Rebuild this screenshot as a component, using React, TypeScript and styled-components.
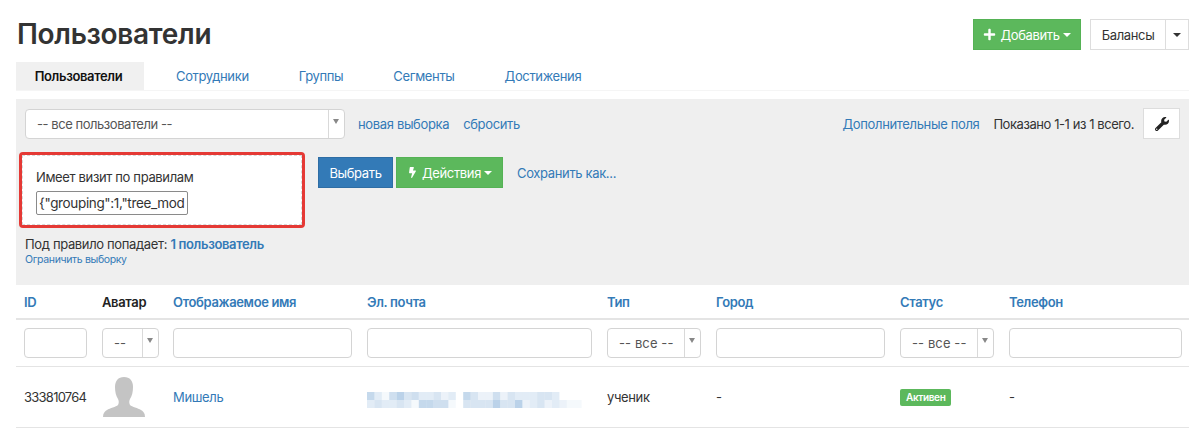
import React from 'react';
import styled, { createGlobalStyle, css } from 'styled-components';
import { FaBolt, FaPlus, FaWrench } from 'react-icons/fa';

const GlobalStyle = createGlobalStyle`
  html, body {
    margin: 0;
    background: #fff;
    overflow: hidden;
  }
  body {
    font-family: Inter, "Liberation Sans", sans-serif;
    font-size: 13px;
    letter-spacing: -0.35px;
    color: #333;
  }
  * {
    box-sizing: border-box;
  }
`;

const Page = styled.div`
  width: 1200px;
  height: 428px;
  padding: 19px 11px 0 16px;
`;

const Header = styled.header`
  display: flex;
  justify-content: space-between;
  height: 43px;
`;

const Title = styled.h1`
  margin: 0 0 0 1px;
  font-size: 28px;
  line-height: 30px;
  font-weight: 600;
  letter-spacing: -0.3px;
  color: #333;
`;

const HeaderActions = styled.div`
  display: flex;
  gap: 9px;
`;

const Caret = styled.span<{ dark?: boolean }>`
  display: inline-block;
  width: 0;
  height: 0;
  margin-left: -1px;
  border-top: 4px solid ${(p) => (p.dark ? '#333' : '#fff')};
  border-left: 4px solid transparent;
  border-right: 4px solid transparent;
`;

const Button = styled.button<{ tone?: 'green' | 'blue' | 'white'; width: number }>`
  display: inline-flex;
  align-items: center;
  justify-content: center;
  gap: 4px;
  flex: none;
  width: ${(p) => p.width}px;
  height: 31px;
  padding: 0;
  font: inherit;
  letter-spacing: inherit;
  border-radius: 0;
  color: #fff;
  border: 1px solid #55b255;
  background: #5cb85c;
  ${(p) =>
    p.tone === 'blue' &&
    css`
      background: #337ab7;
      border-color: #2e6da4;
    `}
  ${(p) =>
    p.tone === 'white' &&
    css`
      background: #fff;
      border-color: #ddd;
      color: #333;
    `}
`;

const WrenchButton = styled(Button)`
  margin-left: 9px;
`;

const SplitGroup = styled.div`
  display: flex;
  ${Button} + ${Button} {
    margin-left: -1px;
  }
`;

const Tabs = styled.nav`
  display: flex;
  height: 29px;
  border-bottom: 1px solid #f5f5f5;
`;

const Tab = styled.a<{ active?: boolean }>`
  display: flex;
  align-items: center;
  justify-content: center;
  height: 28px;
  padding: 0 25px;
  color: #337ab7;
  ${(p) =>
    p.active &&
    css`
      width: 128px;
      margin-right: 7px;
      padding: 0 3px 0 0;
      background: #f0f0f0;
      color: #111;
      font-weight: 600;
    `}
`;

const FilterPanel = styled.section`
  margin-top: 8px;
  height: 186px;
  padding: 9px 9px 0 3px;
  background: #efefef;
`;

const TopRow = styled.div`
  display: flex;
  align-items: center;
  margin-left: 6px;
  height: 31px;
`;

const SelectBox = styled.div<{ width: number; loose?: boolean }>`
  display: flex;
  flex: none;
  width: ${(p) => p.width}px;
  height: 30px;
  background: #fff;
  border: 1px solid #d4d4d4;
  border-radius: 4px;
  color: #555;
  letter-spacing: ${(p) => (p.loose ? '0.1px' : '-0.45px')};
`;

const SelectValue = styled.span`
  flex: 1;
  display: flex;
  align-items: center;
  padding-left: 11px;
`;

const SelectArrow = styled.span`
  position: relative;
  flex: none;
  width: 16px;
  border-left: 1px solid #d9d9d9;
  &::after {
    content: '';
    position: absolute;
    left: 4px;
    top: 9px;
    border-top: 5px solid #888;
    border-left: 3px solid transparent;
    border-right: 3px solid transparent;
  }
`;

const Link = styled.a<{ strong?: boolean; small?: boolean }>`
  color: #337ab7;
  font-weight: ${(p) => (p.strong ? 600 : 400)};
  font-size: ${(p) => (p.small ? 10.5 : 13)}px;
  white-space: nowrap;
`;

const LinkGroup = styled.div`
  display: flex;
  gap: 14px;
  margin-left: 13px;
`;

const Summary = styled.div`
  display: flex;
  align-items: center;
  margin-left: auto;
  gap: 14px;
`;

const Shown = styled.span`
  letter-spacing: -0.43px;
`;

const RuleRow = styled.div`
  display: flex;
  margin-top: 13px;
`;

const Highlight = styled.div`
  width: 286px;
  height: 76px;
  border: 3px solid #e53935;
  border-radius: 4px;
`;

const RuleBox = styled.div`
  height: 100%;
  padding: 13px 0 0 13px;
  background: #fff;
  border: 1px dashed #d8d8d8;
`;

const RuleLabel = styled.div`
  line-height: 17px;
  margin-bottom: 5px;
`;

const RuleInput = styled.div`
  width: 152px;
  height: 24px;
  padding: 0 2px;
  line-height: 22px;
  font-size: 13.5px;
  white-space: nowrap;
  border: 1px solid #8a8a8a;
  border-radius: 2px;
`;

const RuleActions = styled.div`
  display: flex;
  align-items: center;
  align-self: flex-start;
  gap: 3px;
  margin: 5px 0 0 13px;
`;

const SaveLink = styled(Link)`
  margin-left: 11px;
`;

const Matches = styled.div`
  margin: 8px 0 0 6px;
  line-height: 17px;
`;

const Narrow = styled.div`
  margin: -1px 0 0 6px;
  line-height: 13px;
`;

const TableRow = styled.div<{ height: number; border?: number }>`
  display: grid;
  grid-template-columns: 63px 56px 179px 225px 94px 169px 94px 173px;
  column-gap: 15px;
  align-items: center;
  height: ${(p) => p.height}px;
  padding: 0 7px 0 8px;
  border-bottom: ${(p) => p.border ?? 1}px solid #e4e4e4;
`;

const HeadCell = styled.div<{ plain?: boolean }>`
  color: ${(p) => (p.plain ? '#222' : '#337ab7')};
  font-weight: 600;
`;

const IdCell = styled.span`
  letter-spacing: -0.75px;
`;

const TextInput = styled.div`
  height: 30px;
  background: #fff;
  border: 1px solid #d4d4d4;
  border-radius: 4px;
`;

const Badge = styled.span`
  display: inline-block;
  padding: 0 6px;
  height: 17px;
  line-height: 17px;
  background: #5cb85c;
  border-radius: 2px;
  color: #fff;
  font-size: 10px;
  font-weight: 600;
`;

const AvatarCell = styled.div`
  display: flex;
  height: 40px;
  margin-left: 1px;
`;

const BlurSvg = styled.svg`
  display: block;
  margin-top: 6px;
  filter: blur(0.6px);
`;

const row1 = [6, 3, 1, 5, 7, 4, 5, 3, 3, 4, 2, 3, 0, 6, 4, 2, 2, 5, 2, 4, 3, 3, 3, 4, 4, 3, 0, 0, 0, 0];
const row2 = [3, 4, 3, 3, 4, 3, 1, 6, 6, 5, 5, 1, 0, 4, 4, 4, 4, 7, 4, 4, 7, 2, 3, 4, 2, 3, 2, 1, 1, 0];

function Avatar() {
  return (
    <svg width="42" height="40" viewBox="0 0 42 40">
      <path
        fill="#c4c4c4"
        d="M21 0c-6 0-9 4-9 10 0 5 1 9 3 12 1 2 1 4 0 6-2 2-8 3-11 5-2 1-4 3-4 7h42c0-4-2-6-4-7-3-2-9-3-11-5-1-2-1-4 0-6 2-3 3-7 3-12 0-6-3-10-9-10z"
      />
    </svg>
  );
}

function BlurredEmail() {
  return (
    <BlurSvg width="220" height="16" viewBox="0 0 220 16">
      {[row1, row2].map((cells, r) =>
        cells.map((v, i) => <rect key={`${r}-${i}`} x={i * 7.4} y={r * 8} width="7.4" height="8" fill="#8db4da" opacity={v * 0.085} />)
      )}
    </BlurSvg>
  );
}

export default function App() {
  return (
    <Page>
      <GlobalStyle />
      <Header>
        <Title>Пользователи</Title>
        <HeaderActions>
          <Button width={108}>
            <FaPlus size={13} /> Добавить <Caret />
          </Button>
          <SplitGroup>
            <Button tone="white" width={76}>Балансы</Button>
            <Button tone="white" width={24}>
              <Caret dark />
            </Button>
          </SplitGroup>
        </HeaderActions>
      </Header>

      <Tabs>
        <Tab active>Пользователи</Tab>
        <Tab>Сотрудники</Tab>
        <Tab>Группы</Tab>
        <Tab>Сегменты</Tab>
        <Tab>Достижения</Tab>
      </Tabs>

      <FilterPanel>
        <TopRow>
          <SelectBox width={320}>
            <SelectValue>-- все пользователи --</SelectValue>
            <SelectArrow />
          </SelectBox>
          <LinkGroup>
            <Link>новая выборка</Link>
            <Link>сбросить</Link>
          </LinkGroup>
          <Summary>
            <Link>Дополнительные поля</Link>
            <Shown>Показано 1-1 из 1 всего.</Shown>
          </Summary>
          <WrenchButton tone="white" width={37}>
            <FaWrench size={14} color="#222" />
          </WrenchButton>
        </TopRow>

        <RuleRow>
          <Highlight>
            <RuleBox>
              <RuleLabel>Имеет визит по правилам</RuleLabel>
              <RuleInput>{'{"grouping":1,"tree_mod'}</RuleInput>
            </RuleBox>
          </Highlight>
          <RuleActions>
            <Button tone="blue" width={75}>Выбрать</Button>
            <Button width={107}>
              <FaBolt size={11} /> Действия <Caret />
            </Button>
            <SaveLink>Сохранить как...</SaveLink>
          </RuleActions>
        </RuleRow>

        <Matches>
          Под правило попадает: <Link strong>1 пользователь</Link>
        </Matches>
        <Narrow>
          <Link small>Ограничить выборку</Link>
        </Narrow>
      </FilterPanel>

      <TableRow height={35} border={2}>
        <HeadCell>ID</HeadCell>
        <HeadCell plain>Аватар</HeadCell>
        <HeadCell>Отображаемое имя</HeadCell>
        <HeadCell>Эл. почта</HeadCell>
        <HeadCell>Тип</HeadCell>
        <HeadCell>Город</HeadCell>
        <HeadCell>Статус</HeadCell>
        <HeadCell>Телефон</HeadCell>
      </TableRow>

      <TableRow height={47}>
        <TextInput />
        <SelectBox width={57} loose>
          <SelectValue>--</SelectValue>
          <SelectArrow />
        </SelectBox>
        <TextInput />
        <TextInput />
        <SelectBox width={94} loose>
          <SelectValue>-- все --</SelectValue>
          <SelectArrow />
        </SelectBox>
        <TextInput />
        <SelectBox width={94} loose>
          <SelectValue>-- все --</SelectValue>
          <SelectArrow />
        </SelectBox>
        <TextInput />
      </TableRow>

      <TableRow height={61}>
        <IdCell>333810764</IdCell>
        <AvatarCell>
          <Avatar />
        </AvatarCell>
        <Link>Мишель</Link>
        <BlurredEmail />
        <span>ученик</span>
        <span>-</span>
        <div>
          <Badge>Активен</Badge>
        </div>
        <span>-</span>
      </TableRow>
    </Page>
  );
}
